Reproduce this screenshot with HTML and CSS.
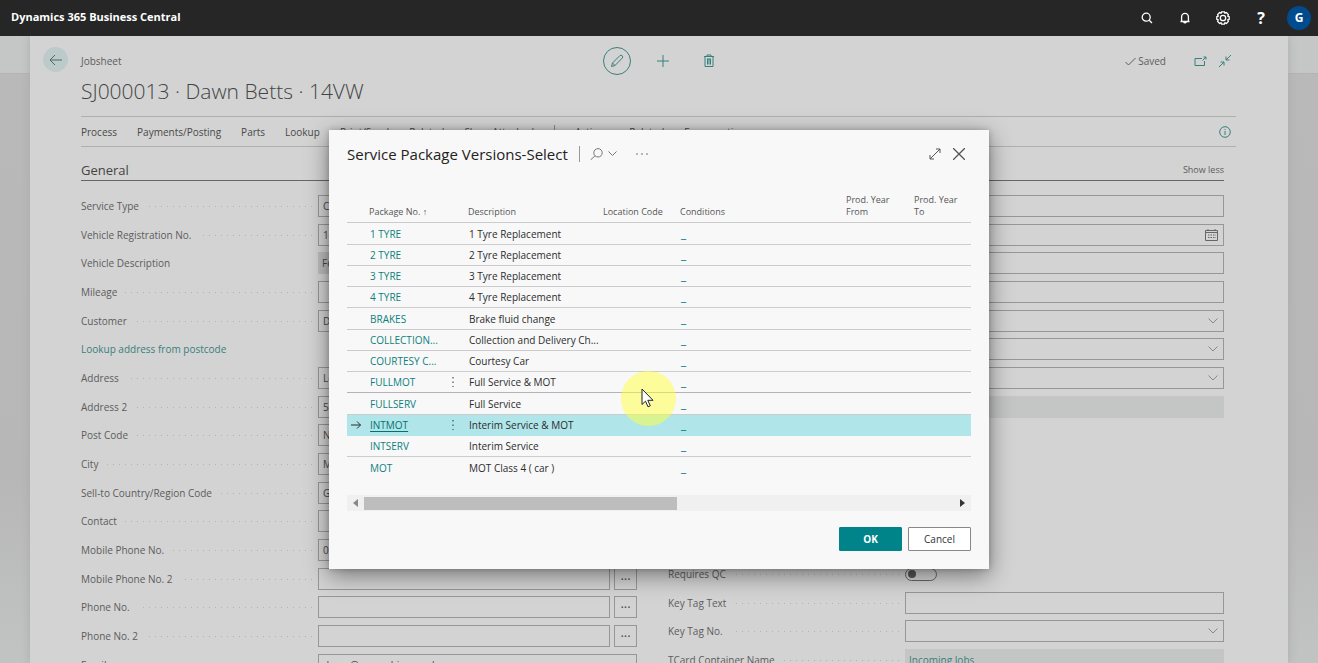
FILE: index.html
```html
<!DOCTYPE html>
<html lang="en">
<head>
<meta charset="utf-8">
<title>Dynamics 365 Business Central</title>
<link rel="stylesheet" href="styles.css">
</head>
<body>
<header class="topbar">
  <span class="brand">Dynamics 365 Business Central</span>
  <nav class="topbar-tools">
    <button class="tool" aria-label="Search"><svg width="14" height="14" viewBox="0 0 14 14"><circle cx="6.2" cy="6.2" r="4"/><path d="M9.2 9.2 12 12"/></svg></button>
    <button class="tool" aria-label="Notifications"><svg width="14" height="14" viewBox="0 0 14 14"><path d="M2.5 10.5h9M3.6 10.3V6a3.4 3.6 0 0 1 6.8 0v4.300M5.700 11a1.400 1.400 0 0 0 2.600 0"/></svg></button>
    <button class="tool" aria-label="Settings"><svg width="16" height="16" viewBox="0 0 16 16"><circle cx="8" cy="8" r="2.700"/><path d="M6.600 1.800h2.800l.5 1.400 1.500-.6 2 2-.6 1.500 1.400.5v2.800l-1.400.5.6 1.500-2 2-1.500-.6-.5 1.400H6.600l-.5-1.400-1.500.6-2-2 .6-1.500-1.400-.5V6.600l1.400-.5-.6-1.500 2-2 1.500.6z"/></svg></button>
    <button class="tool help" aria-label="Help">?</button>
    <button class="avatar" aria-label="Account">G</button>
  </nav>
</header>

<main class="workspace">
  <section class="card">
    <div class="card-head">
      <button class="back" aria-label="Back"><svg width="14" height="12" viewBox="0 0 14 12"><path d="M13 6H1M6 1 1 6l5 5"/></svg></button>
      <span class="crumb">Jobsheet</span>
      <div class="page-actions">
        <button class="edit" aria-label="Edit"><svg width="14" height="14" viewBox="0 0 14 14"><path d="M1.500 12.500 2.500 9 9.800 1.700a1.500 1.500 0 0 1 2.400 2.400L5 11.500zM2.500 9 5 11.500"/></svg></button>
        <button class="plain" aria-label="New"><svg width="12" height="12" viewBox="0 0 12 12"><path d="M6 0v12M0 6h12"/></svg></button>
        <button class="plain" aria-label="Delete"><svg width="12" height="14" viewBox="0 0 12 14"><path d="M1 2.500h10M4 2V1h4v1M2 2.500v10h8v-10M4.500 5v5.500M6 5v5.500M7.500 5v5.500M4 5h4"/></svg></button>
      </div>
      <div class="status">
        <span class="saved"><svg width="11" height="9" viewBox="0 0 11 9"><path d="M.5 5 3.500 8l7-7"/></svg>Saved</span>
        <button class="plain" aria-label="Open in new window"><svg width="13" height="11" viewBox="0 0 13 11"><path d="M8 2.500H1v7h9.500V5M8.500 4.500 12 1M9.500 1H12v2.500"/></svg></button>
        <button class="plain" aria-label="Collapse"><svg width="12" height="12" viewBox="0 0 12 12"><path d="M12 0 7 5M7 1.500V5h3.500M0 12l5-5M1.500 7H5v3.500"/></svg></button>
      </div>
    </div>
    <h1 class="title">SJ000013 · Dawn Betts · 14VW</h1>
    <nav class="action-bar">
      <a href="#">Process</a><a href="#">Payments/Posting</a><a href="#">Parts</a><a href="#">Lookup</a><a href="#">Print/Send</a><a href="#">Related</a><a href="#">Show Attached</a><i class="bar-rule"></i><a href="#">Actions</a><a href="#">Related</a><a href="#">Fewer options</a>
      <button class="plain info" aria-label="Details"><svg width="12" height="12" viewBox="0 0 12 12"><circle cx="6" cy="6" r="5.300"/><path d="M6 5v4M6 3v1"/></svg></button>
    </nav>
    <div class="section">
      <div class="section-head"><h2>General</h2><a class="less" href="#">Show less</a></div>
      <div class="columns">
        <div class="fields">
          <div class="row"><label for="f1">Service Type</label><input id="f1" value="C"></div>
          <div class="row"><label for="f2">Vehicle Registration No.</label><input id="f2" value="14VW"></div>
          <div class="row nodots"><label for="f3">Vehicle Description</label><input id="f3" class="filled" value="Fo" readonly></div>
          <div class="row"><label for="f4">Mileage</label><input id="f4"></div>
          <div class="row"><label for="f5">Customer</label><input id="f5" value="Dawn Betts"></div>
          <div class="row nodots"><a class="lookup" href="#">Lookup address from postcode</a></div>
          <div class="row"><label for="f7">Address</label><input id="f7" value="Lo"></div>
          <div class="row"><label for="f8">Address 2</label><input id="f8" value="54"></div>
          <div class="row"><label for="f9">Post Code</label><input id="f9" value="N"></div>
          <div class="row"><label for="f10">City</label><input id="f10" value="M"></div>
          <div class="row"><label for="f11">Sell-to Country/Region Code</label><input id="f11" value="G"></div>
          <div class="row"><label for="f12">Contact</label><input id="f12"></div>
          <div class="row"><label for="f13">Mobile Phone No.</label><input id="f13" value="0"></div>
          <div class="row"><label for="f14">Mobile Phone No. 2</label><div class="pair"><input id="f14"><button class="more" aria-label="More">···</button></div></div>
          <div class="row"><label for="f15">Phone No.</label><div class="pair"><input id="f15"><button class="more" aria-label="More">···</button></div></div>
          <div class="row"><label for="f16">Phone No. 2</label><div class="pair"><input id="f16"><button class="more" aria-label="More">···</button></div></div>
          <div class="row"><label for="f17">Email</label><input id="f17" value="demo@garagehive.co.uk"></div>
        </div>
        <div class="side">
          <div class="fields">
            <div class="row bare"><input aria-label="Field 1"></div>
            <div class="row bare"><div class="boxed"><input aria-label="Date"><svg class="cal" width="13" height="12" viewBox="0 0 13 12"><path d="M.5 1.500h12v10H.5zM.5 3.500h12M3 0v2M10 0v2"/><path d="M3 6h8M3 8.500h8" stroke-dasharray="1.500 1"/></svg></div></div>
            <div class="row bare"><input aria-label="Field 3"></div>
            <div class="row bare"><input aria-label="Field 4"></div>
            <div class="row bare"><div class="boxed"><select aria-label="Field 5"><option></option></select><svg class="chev" width="10" height="6" viewBox="0 0 10 6"><path d="m.5.5 4.500 4.500L9.500.5"/></svg></div></div>
            <div class="row bare"><div class="boxed"><select aria-label="Field 6"><option></option></select><svg class="chev" width="10" height="6" viewBox="0 0 10 6"><path d="m.5.5 4.500 4.500L9.500.5"/></svg></div></div>
            <div class="row bare"><div class="boxed"><select aria-label="Field 7"><option></option></select><svg class="chev" width="10" height="6" viewBox="0 0 10 6"><path d="m.5.5 4.500 4.500L9.500.5"/></svg></div></div>
            <div class="row bare"><input class="filled" aria-label="Field 8" readonly></div>
          </div>
          <div class="fields lower">
            <div class="row"><label for="qc">Requires QC</label><input type="checkbox" id="qc" class="switch"></div>
            <div class="row"><label for="kt">Key Tag Text</label><input id="kt"></div>
            <div class="row"><label for="kn">Key Tag No.</label><div class="boxed"><select id="kn"><option></option></select><svg class="chev" width="10" height="6" viewBox="0 0 10 6"><path d="m.5.5 4.500 4.500L9.500.5"/></svg></div></div>
            <div class="row"><span class="label">TCard Container Name</span><a class="filled value" href="#">Incoming Jobs</a></div>
          </div>
        </div>
      </div>
    </div>
  </section>

  <div class="overlay">
    <section class="dialog" role="dialog" aria-labelledby="dlg">
      <div class="dialog-head">
        <h2 id="dlg">Service Package Versions-Select</h2>
        <i class="head-rule"></i>
        <button class="plain find" aria-label="Search"><svg width="13" height="12" viewBox="0 0 13 12"><circle cx="8" cy="4.800" r="4.200"/><path d="M5 7.800.5 12"/></svg><svg width="9" height="6" viewBox="0 0 9 6"><path d="m.5.5 4 4 4-4"/></svg></button>
        <button class="plain dots" aria-label="More options"><svg width="12" height="2" viewBox="0 0 12 2"><path d="M0 1h2M5 1h2M10 1h2"/></svg></button>
        <button class="plain expand" aria-label="Expand"><svg width="12" height="12" viewBox="0 0 12 12"><path d="M1 11 11 1M7 1h4v4M1 7v4h4"/></svg></button>
        <button class="plain close" aria-label="Close"><svg width="12" height="12" viewBox="0 0 12 12"><path d="m0 0 12 12M12 0 0 12"/></svg></button>
      </div>
      <table class="list">
        <colgroup><col class="c-mark"><col class="c-no"><col class="c-desc"><col class="c-loc"><col class="c-cond"><col class="c-from"><col></colgroup>
        <thead><tr><th></th><th>Package No. ↑</th><th>Description</th><th>Location Code</th><th>Conditions</th><th>Prod. Year<br>From</th><th>Prod. Year<br>To</th></tr></thead>
        <tbody>
          <tr><td></td><td><a href="#">1 TYRE</a></td><td>1 Tyre Replacement</td><td></td><td><a class="blank" href="#">_</a></td><td></td><td></td></tr>
          <tr><td></td><td><a href="#">2 TYRE</a></td><td>2 Tyre Replacement</td><td></td><td><a class="blank" href="#">_</a></td><td></td><td></td></tr>
          <tr><td></td><td><a href="#">3 TYRE</a></td><td>3 Tyre Replacement</td><td></td><td><a class="blank" href="#">_</a></td><td></td><td></td></tr>
          <tr><td></td><td><a href="#">4 TYRE</a></td><td>4 Tyre Replacement</td><td></td><td><a class="blank" href="#">_</a></td><td></td><td></td></tr>
          <tr><td></td><td><a href="#">BRAKES</a></td><td>Brake fluid change</td><td></td><td><a class="blank" href="#">_</a></td><td></td><td></td></tr>
          <tr><td></td><td><a href="#">COLLECTION...</a></td><td>Collection and Delivery Ch...</td><td></td><td><a class="blank" href="#">_</a></td><td></td><td></td></tr>
          <tr><td></td><td><a href="#">COURTESY C...</a></td><td>Courtesy Car</td><td></td><td><a class="blank" href="#">_</a></td><td></td><td></td></tr>
          <tr class="hovered"><td></td><td><div class="cell"><a href="#">FULLMOT</a><svg width="2" height="12" viewBox="0 0 2 12"><path d="M1 1v10" stroke-dasharray="1.500 3"/></svg></div></td><td>Full Service &amp; MOT</td><td></td><td><a class="blank" href="#">_</a></td><td></td><td></td></tr>
          <tr><td></td><td><a href="#">FULLSERV</a></td><td>Full Service</td><td></td><td><a class="blank" href="#">_</a></td><td></td><td></td></tr>
          <tr class="selected"><td class="mark"><svg width="10" height="8" viewBox="0 0 10 8"><path d="M0 4h9.500M6 .5 9.500 4 6 7.500"/></svg></td><td><div class="cell"><a href="#">INTMOT</a><svg width="2" height="12" viewBox="0 0 2 12"><path d="M1 1v10" stroke-dasharray="1.500 3"/></svg></div></td><td>Interim Service &amp; MOT</td><td></td><td><a class="blank" href="#">_</a></td><td></td><td></td></tr>
          <tr><td></td><td><a href="#">INTSERV</a></td><td>Interim Service</td><td></td><td><a class="blank" href="#">_</a></td><td></td><td></td></tr>
          <tr><td></td><td><a href="#">MOT</a></td><td>MOT Class 4 ( car )</td><td></td><td><a class="blank" href="#">_</a></td><td></td><td></td></tr>
        </tbody>
      </table>
      <div class="scroll">
        <button class="plain" aria-label="Scroll left"><svg width="5" height="8" viewBox="0 0 5 8"><path class="solid light" d="M5 0v8L0 4z"/></svg></button>
        <div class="track"><div class="thumb"></div></div>
        <button class="plain" aria-label="Scroll right"><svg width="5" height="8" viewBox="0 0 5 8"><path class="solid" d="M0 0v8l5-4z"/></svg></button>
      </div>
      <div class="dialog-foot"><button class="btn primary">OK</button><button class="btn">Cancel</button></div>
      <div class="spot"></div>
      <svg class="pointer" width="13" height="20" viewBox="0 0 13 20"><path d="M1 1v15.500l3.500-3.300 2.500 5.600 2.300-1-2.500-5.500H12z"/></svg>
    </section>
  </div>
</main>
</body>
</html>
```
FILE: styles.css
```css
* { box-sizing: border-box; }
body {
  margin: 0;
  height: 100vh;
  display: flex;
  flex-direction: column;
  overflow: hidden;
  font: 10px/16px "Open Sans", "Noto Sans", sans-serif;
  color: #484848;
}
button, input, select { font: inherit; color: inherit; border-radius: 0; }
button { padding: 0; border: 0; background: none; display: flex; align-items: center; justify-content: center; }
a { color: inherit; text-decoration: none; }
svg { display: block; fill: none; stroke: currentColor; stroke-width: 1; flex: none; }
h1, h2 { margin: 0; }

.topbar {
  height: 36px;
  flex: none;
  display: flex;
  justify-content: space-between;
  align-items: center;
  padding: 0 7px 0 11px;
  background: #262626;
  color: #fff;
}
.brand { font-size: 11px; font-weight: 700; padding-bottom: 2px; }
.topbar-tools { display: flex; align-items: center; gap: 14px; }
.tool { width: 24px; height: 24px; }
.tool svg { stroke-width: 1.3; }
.help { font-size: 16px; font-weight: 700; }
.avatar { width: 24px; height: 24px; border-radius: 50%; background: #004b8d; font-size: 12px; font-weight: 700; }

.workspace {
  flex: 1;
  min-height: 0;
  position: relative;
  overflow: hidden;
  padding: 0 30px;
  background: linear-gradient(#c5c7c7 37px, #b3b3b3 37px, #b3b3b3 38px, #b9b9b9 38px, #b7b7b7 70%, #c2c3c3);
}
.card { background: #d3d3d3; padding: 10px 52px 0 51px; height: 100%; overflow: hidden; box-shadow: 0 0 8px #aaa; }
.card-head { display: grid; grid-template-columns: 1fr auto 1fr; align-items: center; height: 30px; position: relative; }
.back { position: absolute; left: -38px; top: 1px; width: 25px; height: 25px; border-radius: 50%; background: #bccbc9; color: #4e6664; }
.page-actions { display: flex; align-items: center; gap: 26px; color: #38807b; margin-left: 4px; }
.edit { width: 28px; height: 28px; border: 1px solid #38807b; border-radius: 50%; margin-right: -4px; }
.plain { min-width: 12px; height: 20px; }
.page-actions .plain { width: 20px; }
.status { display: flex; justify-content: flex-end; align-items: center; gap: 12px; padding-right: 5px; color: #38807b; }
.saved { display: flex; align-items: center; gap: 2px; color: #5c5c5c; margin-right: 16px; }
.crumb { color: #5c5c5c; }
.title { font-size: 21px; line-height: 28px; font-weight: 300; color: #444; padding-top: 1px; height: 40px; }
.action-bar {
  display: flex;
  align-items: center;
  gap: 20px;
  height: 31px;
  border: solid #adb0ae;
  border-width: 1px 0;
  white-space: nowrap;
}
.bar-rule { width: 1px; height: 14px; background: #888; }
.info { margin-left: auto; margin-right: 5px; color: #38807b; }
.section { padding-right: 12px; }
.section-head { display: flex; justify-content: space-between; align-items: center; height: 34px; padding-top: 12px; border-bottom: 1px solid #666; }
.section-head h2 { font-size: 13px; font-weight: 500; color: #444; }
.less { font-size: 9px; color: #5c5c5c; }
.columns { display: grid; grid-template-columns: 1fr 1fr; gap: 31px; padding-top: 14px; }
.row { display: grid; grid-template-columns: 237px minmax(0, 1fr); height: 22px; align-items: center; margin-bottom: 7px; }
.row:nth-child(3n+2) { margin-bottom: 6px; }
.row label, .row .label { display: flex; align-items: center; gap: 8px; padding-right: 6px; color: #5c5c5c; white-space: nowrap; }
.row label::after, .row .label::after {
  content: "";
  flex: 1;
  height: 1px;
  background: repeating-linear-gradient(to left, #b2b2b2 0 1px, transparent 1px 6px);
}
.nodots label::after { display: none; }
.row input, .row select, .value {
  width: 100%;
  min-width: 0;
  height: 22px;
  padding: 0 4px;
  border: 1px solid #979797;
  background: transparent;
  outline: 0;
  appearance: none;
}
.row .filled { border: 0; background: #c4c6c5; }
.fields > .nodots .filled { background: #bcbcbc; }
.value { display: flex; align-items: center; color: #38807b; }
.bare > * { grid-column: 2; }
.pair { display: flex; gap: 4px; }
.pair input { flex: 1; }
.more { width: 23px; height: 22px; border: 1px solid #979797; font-size: 13px; }
.boxed { position: relative; }
.chev, .cal { position: absolute; right: 6px; top: 8px; color: #888; }
.cal { top: 5px; color: #666; }
.lookup { color: #38807b; white-space: nowrap; }
.lower { margin-top: 145px; }
.row .switch { width: 32px; height: 13px; border: 1px solid #666; border-radius: 7px; margin: 0; display: flex; align-items: center; padding: 0 2px; }
.switch::before { content: ""; width: 8px; height: 8px; border-radius: 50%; background: #555; }

.overlay { position: absolute; inset: 0; display: flex; align-items: center; justify-content: center; }
.dialog {
  position: relative;
  width: 660px;
  padding: 14px 18px 18px;
  background: #f8f8f8;
  color: #2c2c2c;
  box-shadow: 0 6px 22px rgba(0, 0, 0, .45), 0 0 6px rgba(0, 0, 0, .2);
}
.dialog-head { display: flex; align-items: center; height: 20px; color: #555; }
.dialog-head h2 { font-size: 15px; line-height: 20px; font-weight: 400; color: #222; width: 232px; white-space: nowrap; }
.head-rule { width: 1px; height: 16px; background: #999; margin-right: 10px; }
.find { gap: 5px; color: #777; }
.dots { margin-left: 19px; color: #777; }
.expand { margin-left: auto; margin-right: 12px; }
.close { margin-right: 6px; }
.close svg { stroke-width: 1.3; }
.list { width: 100%; table-layout: fixed; border-collapse: separate; border-spacing: 0; margin-top: 29px; }
.c-mark { width: 17px; }
.c-no { width: 99px; }
.c-desc { width: 135px; }
.c-loc { width: 77px; }
.c-cond { width: 166px; }
.c-from { width: 68px; }
.list th { height: 30px; padding: 0 0 4px 5px; font-size: 9px; line-height: 12px; font-weight: 400; text-align: left; vertical-align: bottom; border-bottom: 1px solid #ccc; color: #555; white-space: nowrap; }
.list td { height: 21px; padding: 0 0 0 6px; line-height: 16px; white-space: nowrap; border-bottom: 1px solid #ccc; }
.list tr:nth-child(4n+1) td { height: 22px; }
.list tbody tr:last-child td { border-bottom: 0; }
.list td a { color: #0b807e; }
.list .blank { font-size: 12px; font-weight: 600; }
.cell { display: flex; align-items: center; justify-content: space-between; padding-right: 9px; }
.list .hovered td { border-bottom-color: #b4b4b8; }
.list .selected td { background: #b0e6e9; border-color: #b0e6e9; }
.list .selected .cell a { text-decoration: underline; text-underline-offset: 2px; color: #07706f; }
.list .mark { padding-left: 4px; }
.scroll { display: flex; align-items: center; height: 16px; margin-top: 17px; background: #f0f0f0; }
.scroll .plain { width: 17px; }
.solid { fill: #333; stroke: none; }
.light { fill: #888; }
.track { flex: 1; }
.thumb { width: 53%; height: 13px; background: #bdbdbd; }
.dialog-foot { display: flex; justify-content: flex-end; gap: 6px; padding-top: 16px; }
.btn { width: 63px; height: 24px; border: 1px solid #888; border-radius: 1px; background: #fff; color: #333; }
.primary { background: #008489; border-color: #008489; color: #fff; font-weight: 700; }
.spot { position: absolute; left: 292px; top: 241px; width: 55px; height: 55px; border-radius: 50%; background: rgba(255, 255, 60, .5); }
.pointer { position: absolute; left: 312px; top: 258px; fill: #fff; color: #222; }
```
